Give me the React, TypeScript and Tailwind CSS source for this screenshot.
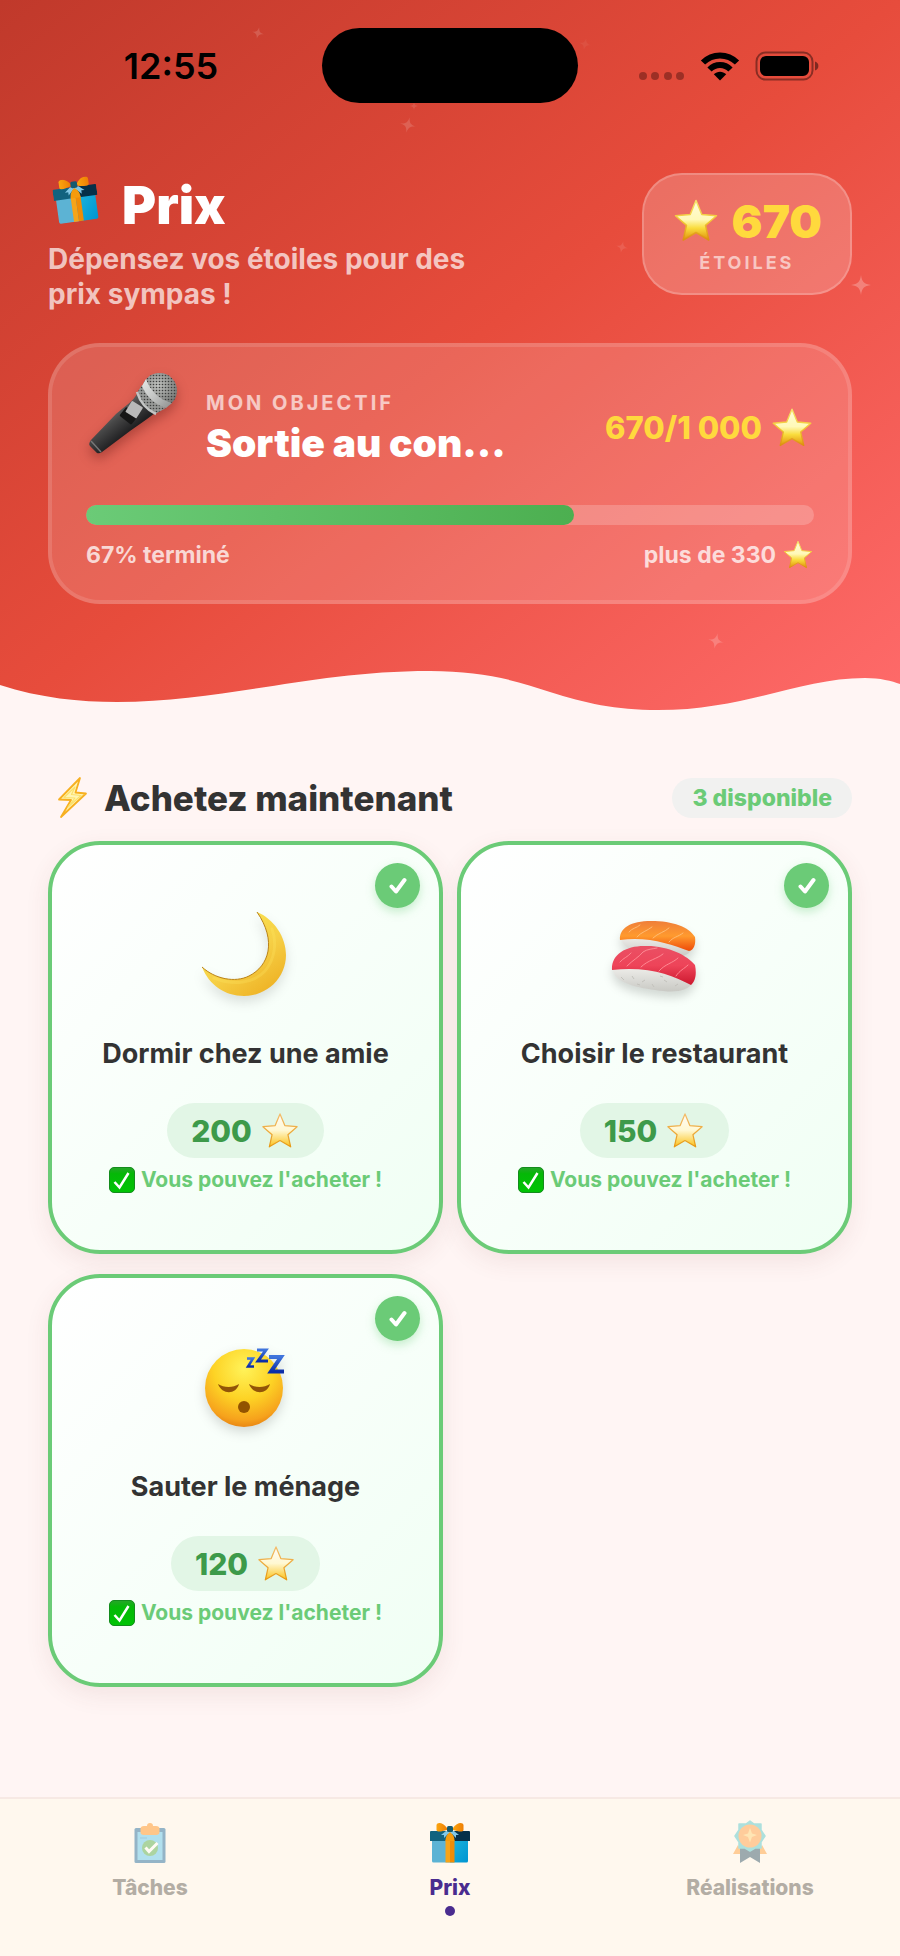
import type { ReactNode } from "react";

type Reward = {
  id: string;
  title: string;
  price: number;
  icon: ReactNode;
};

const rewards: Reward[] = [
  { id: "moon", title: "Dormir chez une amie", price: 200, icon: <MoonIcon /> },
  { id: "sushi", title: "Choisir le restaurant", price: 150, icon: <SushiIcon /> },
  { id: "sleep", title: "Sauter le ménage", price: 120, icon: <SleepIcon /> },
];

const stars = 670;
const goal = 1000;

export default function App() {

  return (
    <div className="flex min-h-screen flex-col bg-[#fff5f4] font-['Inter','Liberation_Sans',sans-serif] text-[#333333]">

      <Gradients />

      {/* HEADER */}

      <header className="relative bg-[linear-gradient(to_bottom_right,#c0392b,#e74c3c_50%,#ff6b6b)]">

        <Sparkles />

        <StatusBar />

        <div className="relative px-12 pt-[70px]">

          <div className="flex items-start justify-between">

            <div>
              <h1 className="flex items-center gap-6 text-[52px] leading-[66px] font-black text-white">
                <span className="-mt-3 ml-1.5 -rotate-8">
                  <GiftIcon className="size-11" />
                </span>
                Prix
              </h1>
              <p className="mt-[3px] max-w-[460px] text-[28px] leading-[35px] font-bold text-white/70">
                Dépensez vos étoiles pour des prix sympas !
              </p>
            </div>

            <div className="flex flex-col items-center rounded-[40px] border-2 border-white/20 bg-white/20 px-7 py-[18px]">
              <div className="flex items-center gap-3 text-[46px] leading-[56px] font-black text-[#ffd93d]">
                <StarIcon className="size-12" />
                {stars}
              </div>
              <p className="mt-0.5 text-[18px] leading-6 font-bold tracking-[3px] text-white/60">
                ÉTOILES
              </p>
            </div>

          </div>

          {/* GOAL */}

          <section className="mt-[31px] rounded-[52px] border-4 border-white/25 bg-white/15 bg-clip-padding px-[34px] pt-6 pb-[31px]">

            <div className="flex items-center gap-6">

              <MicIcon />

              <div className="min-w-0 flex-1">
                <p className="text-[20px] leading-[26px] font-bold tracking-[3px] text-white/65">
                  MON OBJECTIF
                </p>
                <h2 className="mt-[3px] truncate text-[39px] leading-[48px] font-black text-white">
                  Sortie au con...
                </h2>
              </div>

              <div className="flex items-center gap-2 text-[31px] leading-9 font-extrabold text-[#ffd93d]">
                {stars}/1 000
                <StarIcon className="size-11" />
              </div>

            </div>

            <div className="mt-5 h-5 overflow-hidden rounded-full bg-white/20">
              <div
                className="h-full rounded-full bg-linear-to-r from-[#6bcb77] to-[#4caf50]"
                style={{ width: `${(stars / goal) * 100}%` }}
              />
            </div>

            <div className="mt-4 flex h-7 items-center justify-between text-[23px] leading-7 font-bold text-white/75">
              <span>67% terminé</span>
              <span className="flex items-center gap-1.5">
                plus de 330
                <StarIcon className="size-8" />
              </span>
            </div>

          </section>

        </div>

        <svg
          viewBox="0 0 900 60"
          preserveAspectRatio="none"
          className="relative mt-14 block h-[60px] w-full"
        >
          <path
            fill="#fff5f4"
            d="M0 25C40 38 80 42 117 42C225 42 310 11 430 11C480 11 515 20 550 32C585 43 615 50 658 50C745 50 800 18 865 18C880 18 892 21 900 24V61H0Z"
          />
        </svg>

      </header>

      {/* REWARDS */}

      <main className="flex-1 px-12 pt-[58px] pb-24">

        <div className="flex items-center justify-between">
          <h2 className="flex items-center gap-2 text-[35px] leading-10 font-extrabold">
            <BoltIcon />
            Achetez maintenant
          </h2>
          <span className="rounded-full bg-[#f1f1f0] px-5 py-1.5 text-[23px] leading-7 font-extrabold text-[#6bcb77]">
            3 disponible
          </span>
        </div>

        <div className="mt-[23px] grid grid-cols-2 gap-x-3.5 gap-y-5">
          {rewards.map((reward) => (
            <RewardCard key={reward.id} reward={reward} />
          ))}
        </div>

      </main>

      {/* TABS */}

      <nav className="grid grid-cols-3 border-t-2 border-[#f7e9e4] bg-[#fff8ee] pt-6 pb-10">
        <Tab label="Tâches" icon={<ClipboardIcon />} />
        <Tab label="Prix" icon={<GiftIcon className="size-10" />} active />
        <Tab label="Réalisations" icon={<MedalIcon />} />
      </nav>

    </div>
  );
}

/* --------------------------------
   STATUS BAR
-------------------------------- */

function StatusBar() {

  return (
    <div className="relative grid grid-cols-[1fr_256px_1fr] items-center pt-7 text-black">

      <div className="pl-5 text-center text-[36px] leading-10 font-semibold">
        12:55
      </div>

      <div className="h-[75px] rounded-full bg-black" />

      <div className="flex items-center justify-center gap-[15px] pr-5">

        <svg viewBox="0 0 46 30" className="w-[46px]" fill="#5a1712" opacity="0.5">
          <circle cx="4" cy="25" r="4" />
          <circle cx="16" cy="25" r="4" />
          <circle cx="29" cy="25" r="4" />
          <circle cx="41" cy="25" r="4" />
        </svg>

        <svg viewBox="0 0 40 30" className="w-10" fill="none" stroke="#000" strokeWidth="6">
          <path d="M3 11.500C12.500 2 27.500 2 37 11.500" />
          <path d="M9.500 18.500C15.500 12.500 24.500 12.500 30.500 18.500" />
          <path d="M20 29.500L13.800 23.300C17.300 19.800 22.700 19.800 26.200 23.300Z" fill="#000" stroke="none" />
        </svg>

        <svg viewBox="0 0 65 30" className="w-[65px]">
          <rect x="1.500" y="1.500" width="56" height="27" rx="9" fill="none" stroke="#000" strokeOpacity="0.4" strokeWidth="2" />
          <rect x="5" y="5" width="49" height="20" rx="6" />
          <path d="M60 10.500C64.500 11.500 64.500 18.500 60 19.500Z" fillOpacity="0.45" />
        </svg>

      </div>

    </div>
  );
}

/* --------------------------------
   BACKGROUND SPARKLES
-------------------------------- */

function Sparkles() {

  return (
    <div className="absolute inset-0 text-white">
      <Sparkle className="absolute top-[27px] left-[28%] size-3 rotate-12 opacity-15" />
      <Sparkle className="absolute top-[117px] left-[44.400%] size-4 rotate-12 opacity-15" />
      <Sparkle className="absolute top-[38px] left-[64.300%] size-3 rotate-12 opacity-5" />
      <Sparkle className="absolute top-[102px] left-[45.600%] size-2 opacity-10" />
      <Sparkle className="absolute top-[241px] left-[68.400%] size-3 rotate-12 opacity-10" />
      <Sparkle className="absolute top-[275px] left-[94.600%] size-5 opacity-25" />
      <Sparkle className="absolute top-[633px] left-[78.700%] size-4 rotate-12 opacity-20" />
    </div>
  );
}

function Sparkle({ className }: { className: string }) {
  return (
    <svg viewBox="0 0 20 20" className={className} fill="currentColor">
      <path d="M10 0C11 7 13 9 20 10C13 11 11 13 10 20C9 13 7 11 0 10C7 9 9 7 10 0Z" />
    </svg>
  );
}

/* --------------------------------
   REWARD CARD
-------------------------------- */

function RewardCard({ reward }: { reward: Reward }) {

  return (
    <button
      type="button"
      className="relative flex flex-col items-center rounded-[52px] border-4 border-[#6bcb77] bg-[linear-gradient(135deg,#ffffff,#f0fff4)] px-4 pt-[61px] pb-14 shadow-[0_8px_24px_rgba(120,60,60,0.09)]"
    >

      <span className="absolute top-[18px] right-[19px] flex size-[45px] items-center justify-center rounded-full bg-[#6bcb77] shadow-[0_4px_10px_rgba(107,203,119,0.35)]">
        <svg viewBox="0 0 18 18" className="size-[18px]" fill="none" stroke="#fff" strokeWidth="4" strokeLinecap="round" strokeLinejoin="round">
          <path d="M2.500 9.500L7 14.500L15.500 3" />
        </svg>
      </span>

      {reward.icon}

      <span className="mt-9 text-[27px] leading-8 font-bold">
        {reward.title}
      </span>

      <span className="mt-[33px] flex h-[55px] items-center gap-2 rounded-[28px] bg-[#e2f6e6] px-6 text-[30px] leading-9 font-extrabold text-[#3d9a4a]">
        {reward.price}
        <StarIcon className="size-10" outline />
      </span>

      <span className="mt-2 flex items-center gap-1.5 text-[21px] leading-7 font-bold text-[#6bcb77]">
        <CheckBoxIcon />
        Vous pouvez l'acheter !
      </span>

    </button>
  );
}

/* --------------------------------
   TAB
-------------------------------- */

function Tab({ label, icon, active }: { label: string; icon: ReactNode; active?: boolean }) {

  return (
    <button type="button" className="flex flex-col items-center">
      <span className={active ? "" : "opacity-45"}>{icon}</span>
      <span
        className={
          active
            ? "mt-[11px] text-[21px] leading-7 font-extrabold text-[#4a2c8f]"
            : "mt-[11px] text-[21px] leading-7 font-extrabold text-[#b3ada4]"
        }
      >
        {label}
      </span>
      <span className={active ? "mt-1 size-2.5 rounded-full bg-[#4a2c8f]" : "mt-1 size-2.5"} />
    </button>
  );
}

/* --------------------------------
   ICONS
-------------------------------- */

function Gradients() {

  return (
    <svg className="absolute size-0" aria-hidden="true">
      <defs>
        <linearGradient id="star" x1="0" y1="0" x2="0" y2="1">
          <stop offset="0.150" stopColor="#fffbd0" />
          <stop offset="0.480" stopColor="#fff9b8" />
          <stop offset="0.700" stopColor="#f9dc3c" />
          <stop offset="1" stopColor="#e0910c" />
        </linearGradient>
        <linearGradient id="starSoft" x1="0" y1="0" x2="0" y2="1">
          <stop offset="0.100" stopColor="#fffaf0" />
          <stop offset="0.500" stopColor="#fff8d2" />
          <stop offset="1" stopColor="#fbc21a" />
        </linearGradient>
        <linearGradient id="starRim" x1="0" y1="0" x2="0" y2="1">
          <stop offset="0" stopColor="#f5e26a" />
          <stop offset="0.500" stopColor="#f3c935" />
          <stop offset="1" stopColor="#dd8f10" />
        </linearGradient>
        <linearGradient id="starEdge" x1="0" y1="0" x2="0" y2="1">
          <stop offset="0" stopColor="#f3bd6c" />
          <stop offset="1" stopColor="#e79a14" />
        </linearGradient>
        <linearGradient id="boxRight" x1="0" y1="0" x2="1" y2="1">
          <stop offset="0" stopColor="#1db4dc" />
          <stop offset="1" stopColor="#0095d2" />
        </linearGradient>
        <linearGradient id="ribbon" x1="0" y1="0" x2="1" y2="0">
          <stop offset="0" stopColor="#fba50f" />
          <stop offset="1" stopColor="#ee7f04" />
        </linearGradient>
        <linearGradient id="moon" x1="0.300" y1="0.200" x2="0.800" y2="0.900">
          <stop offset="0" stopColor="#f9e04e" />
          <stop offset="0.500" stopColor="#f6cf45" />
          <stop offset="1" stopColor="#efb528" />
        </linearGradient>
        <radialGradient id="face" cx="0.500" cy="0.250" r="0.780">
          <stop offset="0" stopColor="#fff35a" />
          <stop offset="0.500" stopColor="#fdd325" />
          <stop offset="0.850" stopColor="#f6a21c" />
          <stop offset="1" stopColor="#e57e10" />
        </radialGradient>
        <linearGradient id="zed" x1="0" y1="0" x2="0" y2="1">
          <stop offset="0" stopColor="#3f74dc" />
          <stop offset="1" stopColor="#0b2da8" />
        </linearGradient>
        <linearGradient id="salmon" x1="0" y1="0" x2="0" y2="1">
          <stop offset="0" stopColor="#ef7f3a" />
          <stop offset="0.500" stopColor="#ff9a2e" />
          <stop offset="1" stopColor="#ee4a08" />
        </linearGradient>
        <linearGradient id="tuna" x1="0" y1="0" x2="0" y2="1">
          <stop offset="0" stopColor="#ea5064" />
          <stop offset="0.500" stopColor="#ee4459" />
          <stop offset="1" stopColor="#cc182e" />
        </linearGradient>
        <linearGradient id="rice" x1="0" y1="0" x2="0" y2="1">
          <stop offset="0" stopColor="#f3f2ef" />
          <stop offset="1" stopColor="#c9c9c4" />
        </linearGradient>
        <linearGradient id="micBody" x1="0.300" y1="0.300" x2="0.600" y2="0.650">
          <stop offset="0" stopColor="#6f6f6f" />
          <stop offset="0.400" stopColor="#484848" />
          <stop offset="1" stopColor="#202022" />
        </linearGradient>
        <radialGradient id="micHead" cx="0.450" cy="0.350" r="0.700">
          <stop offset="0" stopColor="#bfc1be" />
          <stop offset="1" stopColor="#6c6e6c" />
        </radialGradient>
        <linearGradient id="micBand" x1="0" y1="0" x2="1" y2="1">
          <stop offset="0" stopColor="#e6e8e7" />
          <stop offset="0.500" stopColor="#c3c5c4" />
          <stop offset="1" stopColor="#8d8f8e" />
        </linearGradient>
        <pattern id="mesh" width="3" height="3" patternUnits="userSpaceOnUse">
          <circle cx="1.500" cy="1.500" r="0.800" fill="#3c3e3d" />
        </pattern>
        <linearGradient id="checkBox" x1="0" y1="0" x2="0" y2="1">
          <stop offset="0" stopColor="#27a52a" />
          <stop offset="0.250" stopColor="#05b807" />
          <stop offset="1" stopColor="#00c405" />
        </linearGradient>
      </defs>
    </svg>
  );
}

function StarIcon({ className, outline }: { className: string; outline?: boolean }) {

  return (
    <svg viewBox="0 0 48 48" className={className}>
      <path
        d="M24 3.500L29.800 17.500L44.500 18.800L33.500 28.400L36.800 43L24 35.500L11.200 43L14.500 28.400L3.500 18.800L18.200 17.500Z"
        fill={outline ? "url(#starSoft)" : "url(#star)"}
        stroke={outline ? "url(#starEdge)" : "url(#starRim)"}
        strokeWidth="1.500"
        strokeLinejoin="round"
      />
    </svg>
  );
}

function GiftIcon({ className }: { className: string }) {

  return (
    <svg viewBox="0 0 40 40" className={className}>
      <path d="M2 17H20V39.500H3.500Q2 39.500 2 38Z" fill="#5cb3d4" />
      <path d="M20 17H38V38Q38 39.500 36.500 39.500H20Z" fill="url(#boxRight)" />
      <path d="M1 8H20V18H0V9Q0 8 1 8Z" fill="#12637f" />
      <path d="M20 8H39Q40 8 40 9V18H20Z" fill="#063049" />
      <path d="M15.500 17H20V39.500H15.500Z" fill="#f7a418" />
      <path d="M20 17H24.500V39.500H20Z" fill="#f08c06" />
      <path d="M17 5C13 -1 7 -1 6.500 2V7C7 9.500 12 8.500 17 7Z" fill="url(#ribbon)" />
      <path d="M23 5C27 -1 33 -1 33.500 2V7C33 9.500 28 8.500 23 7Z" fill="url(#ribbon)" />
      <path d="M16 8L24 8L29 12L26 12L26 15L22 11L18 11L14 15L14 12L11 12Z" fill="#82c8e5" />
      <path d="M20 9C16 12 15.500 15 15.500 18H24.500C24.500 15 24 12 20 9Z" fill="#f59b0c" />
      <rect x="17" y="3" width="6" height="6" rx="1.500" fill="#155a70" />
    </svg>
  );
}

function MicIcon() {

  return (
    <svg viewBox="0 0 96 96" className="mb-[18px] size-24 drop-shadow-[0_6px_6px_rgba(60,0,0,0.3)]">
      <path d="M52 21L69 42C60 49 52 54 44 60L16 81Q13 83 11 82L4 75Q2 73 5 69L30 43C40 34 47 31 52 21Z" fill="url(#micBody)" />
      <path d="M5 70L15 81" stroke="#777" strokeWidth="1.500" />
      <circle cx="73.500" cy="19.500" r="17.500" fill="url(#micHead)" />
      <circle cx="73.500" cy="19.500" r="17.500" fill="url(#mesh)" />
      <path d="M56 14C61 24 70 34 80 37L69 43C60 38 54 31 51 22Z" fill="#969896" />
      <path d="M56 14C61 24 70 34 80 37L69 43C60 38 54 31 51 22Z" fill="url(#mesh)" />
      <path d="M60 8C64 20 74 29 86 32L80 37C69 34 60 25 56 15Z" fill="url(#micBand)" />
      <path d="M51 21C54 31 61 39 70 43" fill="none" stroke="#c3c5c4" strokeWidth="2.500" />
      <rect x="37" y="38" width="11" height="15" rx="1" fill="#161616" transform="rotate(-52 42 45)" />
      <rect x="42" y="32" width="13" height="13" rx="1" fill="#b9b9b9" transform="rotate(32 48 38)" />
    </svg>
  );
}

function BoltIcon() {

  return (
    <svg viewBox="0 2 48 40" className="h-10 w-12 overflow-visible" fill="none" strokeLinejoin="round">
      <path d="M32 2L11 23.500L23 24L13 41L38 17.500L27.500 16.500Z" fill="#fff5b4" stroke="#f7b021" strokeWidth="1.800" />
      <path d="M27 11L16 21.500L27 22L20 31L33 19.500L23.500 18.500Z" stroke="#fbe06a" strokeWidth="1.200" />
    </svg>
  );
}

function MoonIcon() {

  return (
    <svg viewBox="0 0 96 96" className="size-24 drop-shadow-[0_6px_6px_rgba(0,0,0,0.12)]">
      <path d="M59 6C76 13 88 31 88 49C88 72 69 90 46 90C27 90 11 79 4 61C17 73 37 77 51 70C71 60 79 35 59 6Z" fill="url(#moon)" />
      <path d="M4 61C17 73 37 77 51 70C71 60 79 35 59 6" fill="none" stroke="#b98216" strokeWidth="1" />
      <path d="M16 72C36 80 56 77 67 65C77 53 79 36 74 23" fill="none" stroke="#ffeb68" strokeWidth="3" strokeOpacity="0.250" strokeLinecap="round" />
    </svg>
  );
}

function SushiIcon() {

  return (
    <svg viewBox="0 0 96 96" className="size-24 drop-shadow-[0_6px_5px_rgba(0,0,0,0.15)]">
      <path d="M14 30C14 42 28 47 48 49C68 52 80 52 84 44V38L50 28Z" fill="url(#rice)" />
      <path d="M13 34C12 22 24 15 44 15C66 15 82 21 88 31C89 38 87 44 82 45C64 38 40 30 13 34Z" fill="url(#salmon)" />
      <path d="M30 31C34 26 40 25 45 21M46 32C51 27 58 26 62 22M62 36C66 31 71 31 76 27M22 26C25 22 30 22 33 19" fill="none" stroke="#ffc07a" strokeWidth="0.900" strokeLinecap="round" />
      <path d="M6 62C5 75 26 81 48 84C66 87 82 86 85 76L50 58Z" fill="url(#rice)" />
      <path d="M14 71L17 74M25 70L27 73M35 76L38 74M45 78L47 81M57 74L60 76M68 80L71 78M30 78L33 79M53 70L56 71" stroke="#c3c2bc" strokeWidth="1" />
      <path d="M5 64C4 49 18 40 37 40C60 39 80 49 88 59C90 69 88 76 84 79C65 69 41 60 5 64Z" fill="url(#tuna)" />
      <path d="M20 60C26 54 32 51 36 46C40 43 46 43 50 42M34 61C41 54 50 53 56 48M52 65C58 58 66 57 71 52M69 70C73 64 77 63 81 59M13 56C16 52 21 51 24 47" fill="none" stroke="#ff9099" strokeWidth="0.900" strokeLinecap="round" />
    </svg>
  );
}

function SleepIcon() {

  return (
    <svg viewBox="0 0 96 96" className="size-24 drop-shadow-[0_5px_6px_rgba(0,0,0,0.15)]">
      <circle cx="46" cy="49" r="39" fill="url(#face)" />
      <path d="M20 45C26 49 35 49 41 45C38 56 24 56 20 45Z" fill="#925408" />
      <path d="M51 45C57 49 66 49 72 45C69 56 55 56 51 45Z" fill="#925408" />
      <circle cx="46" cy="68" r="6" fill="#925300" />
      <g fill="none" stroke="url(#zed)" strokeLinejoin="miter">
        <path d="M49 19.500H55L50 27.500H56" strokeWidth="2.500" />
        <path d="M59 11H68L60 22H70" strokeWidth="3" />
        <path d="M71 18H83L73 32.500H86" strokeWidth="4" />
      </g>
    </svg>
  );
}

function CheckBoxIcon() {

  return (
    <svg viewBox="0 0 26 26" className="size-[26px]">
      <rect x="0.500" y="0.500" width="25" height="25" rx="4.500" fill="url(#checkBox)" stroke="#148c1d" strokeWidth="1" />
      <path d="M5.500 15L10.500 20.500L19.500 6" fill="none" stroke="#fff" strokeWidth="2.500" />
    </svg>
  );
}

function ClipboardIcon() {

  return (
    <svg viewBox="0 0 40 40" className="size-10">
      <rect x="4.500" y="5" width="31" height="35" rx="1.500" fill="#15649a" />
      <rect x="7.500" y="9" width="25" height="28" fill="#55c4ee" />
      <path d="M10.500 9V6Q10.500 3 14 3H17Q17 0 20 0Q23 0 23 3H26Q29.500 3 29.500 6V9Q29.500 12 26 12H14Q10.500 12 10.500 9Z" fill="#ff8a10" />
      <circle cx="20" cy="25" r="8" fill="#4aaa42" />
      <path d="M15.500 24.500L19 28.500L27.500 20" fill="none" stroke="#fff" strokeWidth="3" />
      <path d="M10 15H17" stroke="#3392cc" strokeWidth="1" />
    </svg>
  );
}

function MedalIcon() {

  return (
    <svg viewBox="0 0 40 44" className="-mt-1 h-11 w-10">
      <path d="M8 26L3 35H13ZM32 26L37 35H27Z" fill="#ff9a30" />
      <path d="M10 26H30V44L20 38L10 44Z" fill="#274c62" />
      <path d="M20 2L24 5H31V11L35 17L31 23V29H25L20 32L15 29H9V23L5 17L9 11V5H16Z" fill="#4bc5c9" stroke="#4bc5c9" strokeWidth="1.500" strokeLinejoin="round" />
      <circle cx="20" cy="17" r="11.500" fill="#ff9838" />
      <path d="M20 9L22 14.500L27 16L22 18L20 23.500L18 18L13 16L18 14.500Z" fill="#ffcf70" />
    </svg>
  );
}
